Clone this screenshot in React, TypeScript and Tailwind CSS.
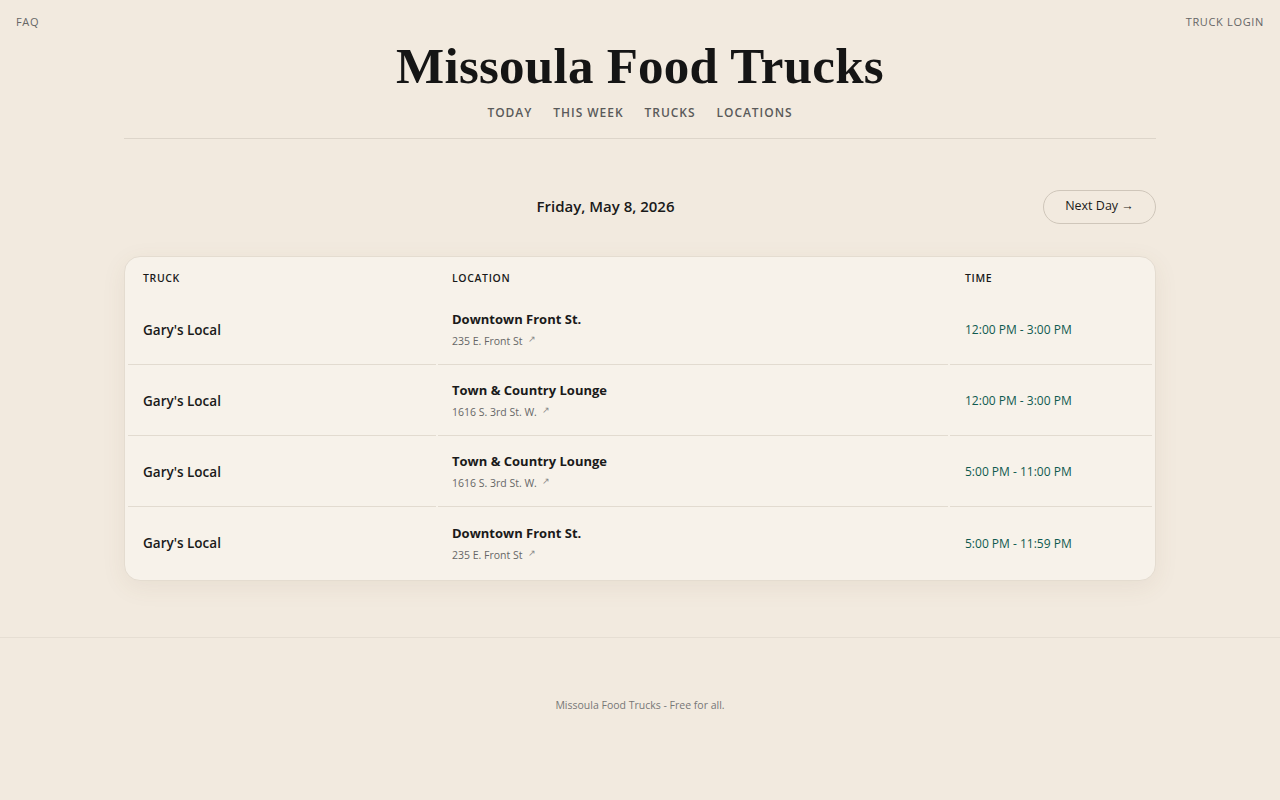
import React from "react";

const rows = [
  { truck: "Gary's Local", loc: "Downtown Front St.", addr: "235 E. Front St", time: "12:00 PM - 3:00 PM" },
  { truck: "Gary's Local", loc: "Town & Country Lounge", addr: "1616 S. 3rd St. W.", time: "12:00 PM - 3:00 PM" },
  { truck: "Gary's Local", loc: "Town & Country Lounge", addr: "1616 S. 3rd St. W.", time: "5:00 PM - 11:00 PM" },
  { truck: "Gary's Local", loc: "Downtown Front St.", addr: "235 E. Front St", time: "5:00 PM - 11:59 PM" },
];

export default function App() {
  return (
    <div className="min-h-[800px] bg-[#f2eadf] text-[#1a1a1a] flex flex-col" style={{ fontFamily: '"Open Sans", "Noto Sans", sans-serif' }}>
      <div className="flex justify-between px-4 pt-[14px] text-[11px] tracking-[0.06em] text-[#666]">
        <a>FAQ</a>
        <a>TRUCK LOGIN</a>
      </div>
      <header className="mx-auto w-[1032px] border-b border-[#ddd5ca] pb-[16px] flex flex-col items-center">
        <h1 className="text-[51px] leading-none font-bold text-[#151515] mt-[10px] tracking-[0.005em]" style={{ fontFamily: '"Liberation Serif", Georgia, serif' }}>
          Missoula Food Trucks
        </h1>
        <nav className="flex gap-[21px] mt-[12px] text-[12px] font-semibold tracking-[0.08em] text-[#5a5a5a]">
          <a>TODAY</a>
          <a>THIS WEEK</a>
          <a>TRUCKS</a>
          <a>LOCATIONS</a>
        </nav>
      </header>
      <main className="mx-auto w-[1032px] pt-[51px] pb-[56px]">
        <div className="flex items-center h-[34px]">
          <div className="flex-1 pl-[44px] text-center text-[15px] font-semibold">Friday, May 8, 2026</div>
          <button className="h-[34px] w-[113px] rounded-full border border-[#cfc6ba] text-[12.5px] font-medium">
            Next Day →
          </button>
        </div>
        <div className="mt-[32px] rounded-[16px] border border-[#e4dcd0] bg-[#f7f2ea] shadow-[0_6px_24px_rgba(120,90,50,0.08)] px-[1px] pb-[2px] overflow-hidden">
          <table className="w-full border-separate border-spacing-x-[2px] border-spacing-y-0">
            <thead>
              <tr className="h-[37px] text-left text-[10.5px] font-semibold tracking-[0.06em] text-[#1a1a1a]">
                <th className="w-[308px] pl-[15px] pt-[7px] font-semibold">TRUCK</th>
                <th className="w-[510px] pl-[14px] pt-[7px] font-semibold">LOCATION</th>
                <th className="pl-[15px] pt-[7px] font-semibold">TIME</th>
              </tr>
            </thead>
            <tbody>
              {rows.map((r, i) => {
                const b = i < rows.length - 1 ? "border-b border-[#e2dbd0]" : "";
                return (
                  <tr key={i} className="h-[71px]">
                    <td className={`pl-[15px] pt-[3px] text-[13.5px] font-semibold ${b}`}>{r.truck}</td>
                    <td className={`pl-[14px] pt-[3px] ${b}`}>
                      <div className="text-[13px] font-bold leading-[18px]">{r.loc}</div>
                      <div className="mt-[6px] text-[10.5px] text-[#666] flex items-center gap-[5px]">
                        {r.addr}
                        <span className="text-[9px] -mt-[6px] text-[#888]">↗</span>
                      </div>
                    </td>
                    <td className={`pl-[15px] pt-[3px] text-[12px] font-medium text-[#0f5a50] ${b}`}>{r.time}</td>
                  </tr>
                );
              })}
            </tbody>
          </table>
        </div>
      </main>
      <footer className="border-t border-[#e6ded3] pt-[60px] text-center text-[10.5px] text-[#777]">
        Missoula Food Trucks - Free for all.
      </footer>
    </div>
  );
}
